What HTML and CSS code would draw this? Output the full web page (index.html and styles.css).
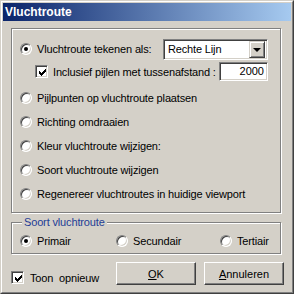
FILE: index.html
```html
<!DOCTYPE html>
<html lang="nl">
<head>
    <meta charset="UTF-8">
    <title>Vluchtroute</title>
    <link rel="stylesheet" href="styles.css">
</head>
<body>
    <div class="window">
        <div class="frame">
            <div class="titlebar">Vluchtroute</div>

            <div class="client">
                <div class="group main-group">
                    <div class="row row-first">
                        <span class="radio checked"></span>
                        <span class="label">Vluchtroute tekenen als:</span>
                        <div class="combo">
                            <span class="combo-text">Rechte Lijn</span>
                            <span class="combo-btn"><span class="arrow"></span></span>
                        </div>
                    </div>
                    <div class="row row-sub">
                        <span class="check">
                            <svg width="9" height="9" viewBox="0 0 9 9" shape-rendering="crispEdges">
                                <rect x="1" y="3" width="1" height="3"/>
                                <rect x="2" y="4" width="1" height="3"/>
                                <rect x="3" y="5" width="1" height="3"/>
                                <rect x="4" y="4" width="1" height="3"/>
                                <rect x="5" y="3" width="1" height="3"/>
                                <rect x="6" y="2" width="1" height="3"/>
                                <rect x="7" y="1" width="1" height="3"/>
                            </svg>
                        </span>
                        <span class="label">Inclusief pijlen met tussenafstand :</span>
                        <div class="field">2000</div>
                    </div>
                    <div class="row">
                        <span class="radio"></span>
                        <span class="label">Pijlpunten op vluchtroute plaatsen</span>
                    </div>
                    <div class="row">
                        <span class="radio"></span>
                        <span class="label">Richting omdraaien</span>
                    </div>
                    <div class="row">
                        <span class="radio"></span>
                        <span class="label">Kleur vluchtroute wijzigen:</span>
                    </div>
                    <div class="row">
                        <span class="radio"></span>
                        <span class="label">Soort vluchtroute wijzigen</span>
                    </div>
                    <div class="row">
                        <span class="radio"></span>
                        <span class="label">Regenereer vluchtroutes in huidige viewport</span>
                    </div>
                </div>

                <div class="group type-group">
                    <div class="group-title">Soort vluchtroute</div>
                    <div class="type-row">
                        <div class="option opt-primair">
                            <span class="radio checked"></span>
                            <span class="label">Primair</span>
                        </div>
                        <div class="option opt-secundair">
                            <span class="radio"></span>
                            <span class="label">Secundair</span>
                        </div>
                        <div class="option">
                            <span class="radio"></span>
                            <span class="label">Tertiair</span>
                        </div>
                    </div>
                </div>

                <div class="footer">
                    <div class="option toon">
                        <span class="check">
                            <svg width="9" height="9" viewBox="0 0 9 9" shape-rendering="crispEdges">
                                <rect x="1" y="3" width="1" height="3"/>
                                <rect x="2" y="4" width="1" height="3"/>
                                <rect x="3" y="5" width="1" height="3"/>
                                <rect x="4" y="4" width="1" height="3"/>
                                <rect x="5" y="3" width="1" height="3"/>
                                <rect x="6" y="2" width="1" height="3"/>
                                <rect x="7" y="1" width="1" height="3"/>
                            </svg>
                        </span>
                        <span class="label">Toon&nbsp; opnieuw</span>
                    </div>
                    <div class="buttons">
                        <button><u>O</u>K</button>
                        <button><u>A</u>nnuleren</button>
                    </div>
                </div>
            </div>
        </div>
    </div>
</body>
</html>
```

FILE: styles.css
```css
body {
    margin: 0;
    background-color: #d4d0c8;
    font-family: "Liberation Sans", Arial, sans-serif;
    font-size: 11px;
    color: #000;
}

.window {
    width: 294px;
    height: 294px;
    box-sizing: border-box;
    border: 1px solid;
    border-color: #d4d0c8 #404040 #404040 #d4d0c8;
}

.frame {
    height: 100%;
    box-sizing: border-box;
    border: 1px solid;
    border-color: #fff #808080 #808080 #fff;
    padding: 1px;
    display: flex;
    flex-direction: column;
}

.titlebar {
    height: 18px;
    line-height: 18px;
    padding-left: 2px;
    background: linear-gradient(to right, #0a246a, #a6caf0);
    color: #fff;
    font-weight: bold;
    font-size: 12px;
}

.client {
    flex: 1;
    padding: 7px 8px 0 8px;
}

/* cadre gravé */
.group {
    position: relative;
    width: 270px;
    box-sizing: border-box;
    border: 1px solid #808080;
    box-shadow: inset 1px 1px 0 #fff, 1px 1px 0 #fff;
}

.main-group {
    height: 185px;
    padding: 8px 12px 0 8px;
}

.row {
    display: flex;
    align-items: center;
    height: 24px;
}

.row-sub {
    height: 21px;
    padding-left: 15px;
    margin-bottom: 4px;
}

.label {
    white-space: nowrap;
    margin-left: 5px;
    letter-spacing: -0.15px;
}

.radio {
    position: relative;
    flex: none;
    width: 12px;
    height: 12px;
    box-sizing: border-box;
    border-radius: 50%;
    background: #fff;
    border: 1px solid;
    border-color: #808080 #fff #fff #808080;
    box-shadow: inset 1px 1px 0 #404040, inset -1px -1px 0 #d4d0c8;
}

.radio.checked::after {
    content: "";
    position: absolute;
    left: 3px;
    top: 3px;
    width: 4px;
    height: 4px;
    border-radius: 50%;
    background: #000;
}

.check {
    flex: none;
    width: 13px;
    height: 13px;
    box-sizing: border-box;
    background: #fff;
    border: 1px solid;
    border-color: #808080 #fff #fff #808080;
    box-shadow: inset 1px 1px 0 #404040, inset -1px -1px 0 #d4d0c8;
    padding: 1px;
}

.check svg {
    display: block;
    margin: 1px 0 0 1px;
    width: 9px;
    height: 9px;
}

.combo {
    margin-left: auto;
    width: 105px;
    height: 21px;
    box-sizing: border-box;
    background: #fff;
    border: 1px solid;
    border-color: #808080 #fff #fff #808080;
    box-shadow: inset 1px 1px 0 #404040, inset -1px -1px 0 #d4d0c8;
    padding: 2px;
    display: flex;
    align-items: center;
}

.combo-text {
    flex: 1;
    padding-left: 2px;
    letter-spacing: -0.15px;
}

.combo-btn {
    width: 16px;
    height: 17px;
    box-sizing: border-box;
    background: #d4d0c8;
    border: 1px solid;
    border-color: #d4d0c8 #404040 #404040 #d4d0c8;
    box-shadow: inset 1px 1px 0 #fff, inset -1px -1px 0 #808080;
    display: flex;
    align-items: center;
    justify-content: center;
}

.arrow {
    width: 0;
    height: 0;
    border-left: 4px solid transparent;
    border-right: 4px solid transparent;
    border-top: 4px solid #000;
    margin-top: 1px;
}

.field {
    margin-left: auto;
    width: 49px;
    height: 19px;
    line-height: 15px;
    box-sizing: border-box;
    background: #fff;
    border: 1px solid;
    border-color: #808080 #fff #fff #808080;
    box-shadow: inset 1px 1px 0 #404040, inset -1px -1px 0 #d4d0c8;
    padding: 1px 3px;
    text-align: right;
}

.type-group {
    margin-top: 9px;
    height: 32px;
    padding: 8px 0 0 8px;
}

.group-title {
    position: absolute;
    top: -7px;
    left: 10px;
    padding: 0 2px;
    background: #d4d0c8;
    color: #1f3d96;
    letter-spacing: -0.15px;
}

.type-row {
    display: flex;
    height: 20px;
    align-items: center;
}

.option {
    display: flex;
    align-items: center;
}

.opt-primair {
    width: 96px;
}

.opt-secundair {
    width: 104px;
}

.footer {
    display: flex;
    align-items: flex-end;
    margin-top: 8px;
}

.toon .label {
    margin-left: 6px;
}

.toon {
    margin-bottom: 1px;
}

.buttons {
    margin-left: auto;
    margin-right: -1px;
    display: flex;
    gap: 8px;
}

button {
    width: 80px;
    height: 23px;
    padding: 0;
    font-family: "Liberation Sans", Arial, sans-serif;
    font-size: 11px;
    color: #000;
    background: #d4d0c8;
    border: 1px solid;
    border-color: #fff #404040 #404040 #fff;
    box-shadow: inset -1px -1px 0 #808080;
}
```
